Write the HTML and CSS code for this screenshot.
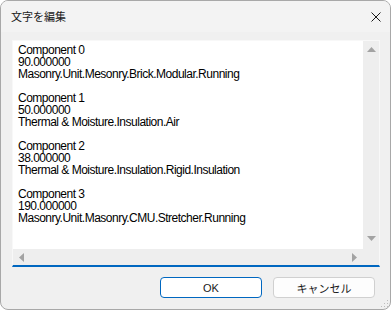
FILE: index.html
```html
<!DOCTYPE html>
<html lang="ja">
<head>
<meta charset="utf-8">
<title>文字を編集</title>
<link rel="stylesheet" href="styles.css">
</head>
<body>
<div class="window">
  <div class="titlebar">
    <span class="title">文字を編集</span>
    <svg class="close" width="10" height="10" viewBox="0 0 10 10"><path d="M0.5 0.5 L9.5 9.5 M9.5 0.5 L0.5 9.5" stroke="#1a1a1a" stroke-width="1" fill="none"/></svg>
  </div>
  <div class="content">
    <div class="textbox">
      <div class="textarea">
        <div class="text">Component 0
90.000000
Masonry.Unit.Mesonry.Brick.Modular.Running

Component 1
50.000000
Thermal &amp; Moisture.Insulation.Air

Component 2
38.000000
Thermal &amp; Moisture.Insulation.Rigid.Insulation

Component 3
190.000000
Masonry.Unit.Masonry.CMU.Stretcher.Running</div>
        <div class="vscroll">
          <svg width="9" height="5" viewBox="0 0 9 5"><path d="M4.5 0 L9 5 L0 5 Z" fill="#a3a3a3"/></svg>
          <svg width="9" height="5" viewBox="0 0 9 5"><path d="M0 0 L9 0 L4.5 5 Z" fill="#a3a3a3"/></svg>
        </div>
      </div>
      <div class="hrow">
        <div class="hscroll">
          <svg width="5" height="9" viewBox="0 0 5 9"><path d="M0 4.5 L5 0 L5 9 Z" fill="#a3a3a3"/></svg>
          <svg width="5" height="9" viewBox="0 0 5 9"><path d="M0 0 L5 4.5 L0 9 Z" fill="#a3a3a3"/></svg>
        </div>
        <div class="corner"></div>
      </div>
    </div>
    <div class="buttons">
      <button class="btn primary">OK</button>
      <button class="btn">キャンセル</button>
    </div>
  </div>
  <svg class="grip" width="10" height="10" viewBox="0 0 10 10">
    <rect x="7" y="1" width="1" height="1" fill="#bdbdbd"/>
    <rect x="4" y="4" width="1" height="1" fill="#bdbdbd"/>
    <rect x="7" y="4" width="1" height="1" fill="#bdbdbd"/>
    <rect x="1" y="7" width="1" height="1" fill="#bdbdbd"/>
    <rect x="4" y="7" width="1" height="1" fill="#bdbdbd"/>
    <rect x="7" y="7" width="1" height="1" fill="#bdbdbd"/>
  </svg>
</div>
</body>
</html>
```
FILE: styles.css
```css
html, body {
  margin: 0;
  padding: 0;
  background: #ffffff;
}
.window {
  position: relative;
  width: 391px;
  height: 310px;
  box-sizing: border-box;
  border: 1px solid #a8a8a8;
  border-radius: 8px;
  background: #f0f0f0;
  overflow: hidden;
  display: flex;
  flex-direction: column;
  font-family: "Liberation Sans", Arial, sans-serif;
}
.titlebar {
  height: 31px;
  flex: none;
  background: #f3f3f3;
  display: flex;
  align-items: center;
  justify-content: space-between;
  padding: 0 9px 0 10px;
}
.title {
  font-family: "Noto Sans CJK JP", sans-serif;
  font-size: 11px;
  color: #1a1a1a;
  margin-top: -1px;
}
.close {
  display: block;
  margin-top: 0px;
}
.content {
  flex: 1;
  display: flex;
  flex-direction: column;
  padding: 8px 10px 0 11px;
}
.textbox {
  width: 368px;
  height: 227px;
  box-sizing: border-box;
  border: 1px solid #f8f8f8;
  border-bottom: 2px solid #0067c0;
  display: flex;
  flex-direction: column;
  background: #eeeeee;
}
.textarea {
  flex: 1;
  display: flex;
  min-height: 0;
}
.text {
  flex: 1;
  background: #ffffff;
  white-space: pre;
  font-size: 12px;
  letter-spacing: -0.5px;
  line-height: 12px;
  color: #000;
  padding: 3px 0 0 5px;
  overflow: hidden;
}
.vscroll {
  width: 16px;
  flex: none;
  background: #eeeeee;
  display: flex;
  flex-direction: column;
  justify-content: space-between;
  align-items: center;
  padding: 6px 0 8px 0;
  box-sizing: border-box;
}
.vscroll svg, .hscroll svg { display: block; }
.hrow {
  height: 16px;
  flex: none;
  display: flex;
}
.hscroll {
  flex: 1;
  display: flex;
  align-items: center;
  justify-content: space-between;
  padding: 0 6px 0 6px;
}
.corner {
  width: 16px;
  flex: none;
}
.buttons {
  display: flex;
  justify-content: flex-end;
  gap: 11px;
  margin-top: 10px;
  padding-right: 5px;
}
.btn {
  width: 102px;
  height: 21px;
  box-sizing: border-box;
  border: 1px solid #d0d0d0;
  border-radius: 4px;
  background: #fdfdfd;
  font-family: "Liberation Sans", "Noto Sans CJK JP", sans-serif;
  font-size: 11px;
  color: #1a1a1a;
  padding: 0;
  margin: 0;
}
.btn.primary {
  border-color: #0067c0;
  background: #ffffff;
}
.grip {
  position: absolute;
  right: 0;
  bottom: 0;
}
```
